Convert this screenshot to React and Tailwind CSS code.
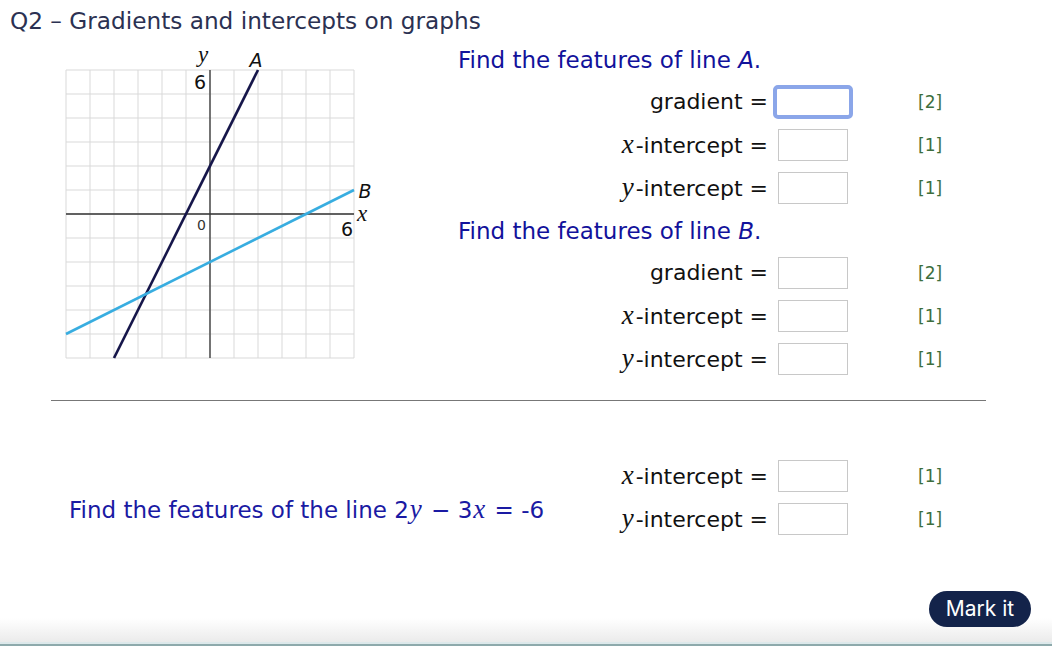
import React from "react";

const sans = { fontFamily: '"DejaVu Sans", Verdana, sans-serif' };

function V({ children }) {
  return (
    <span className="ml-[1px] mr-[2px] italic text-[27px] leading-none" style={{ fontFamily: '"Liberation Serif", "DejaVu Serif", serif' }}>
      {children}
    </span>
  );
}

function Row({ label, mark, focused }) {
  return (
    <div className="flex h-[43px] items-center">
      <div className="w-[310px] text-right text-[22px] leading-[24px] text-[#111] whitespace-nowrap">{label}</div>
      <div className="ml-[10px] flex w-[70px] justify-center">
        {focused ? (
          <div className="h-[34px] w-[80px] shrink-0 rounded-[5px] border-[4px] border-[#8ba6e9] bg-white" />
        ) : (
          <div className="h-[32px] w-[70px] shrink-0 border border-[#c8c8c8] bg-white" />
        )}
      </div>
      <div className="ml-[70px] text-[17px] leading-[20px] text-[#3d6e3d]">{mark}</div>
    </div>
  );
}

function Graph() {
  const vlines = [];
  for (let i = 0; i <= 12; i++) {
    vlines.push(<line key={"v" + i} x1={66 + 24 * i} y1={70} x2={66 + 24 * i} y2={358} stroke="#d9d9d9" strokeWidth="1" />);
    vlines.push(<line key={"h" + i} x1={66} y1={70 + 24 * i} x2={354} y2={70 + 24 * i} stroke="#d9d9d9" strokeWidth="1" />);
  }
  return (
    <svg width="400" height="358" viewBox="0 42 400 358" className="shrink-0 overflow-visible">
      {vlines}
      <line x1="66" y1="214" x2="354" y2="214" stroke="#333" strokeWidth="1.3" />
      <line x1="210" y1="70" x2="210" y2="358" stroke="#333" strokeWidth="1.3" />
      <line x1="114" y1="358" x2="258" y2="70" stroke="#16164a" strokeWidth="2.6" />
      <line x1="66" y1="334" x2="354" y2="190" stroke="#38ade0" strokeWidth="2.6" />
      <text x="203" y="62" fontSize="23" fontStyle="italic" fontFamily="Liberation Serif, serif" textAnchor="middle" fill="#111">y</text>
      <text x="206" y="89" fontSize="19" fontFamily="DejaVu Sans, sans-serif" textAnchor="end" fill="#111">6</text>
      <text x="256" y="67" fontSize="19" fontStyle="italic" fontFamily="DejaVu Sans, sans-serif" textAnchor="middle" fill="#111">A</text>
      <text x="365" y="198" fontSize="19" fontStyle="italic" fontFamily="DejaVu Sans, sans-serif" textAnchor="middle" fill="#111">B</text>
      <text x="362" y="221" fontSize="23" fontStyle="italic" fontFamily="Liberation Serif, serif" textAnchor="middle" fill="#111">x</text>
      <text x="353" y="236" fontSize="19" fontFamily="DejaVu Sans, sans-serif" textAnchor="end" fill="#111">6</text>
      <text x="206" y="230" fontSize="14" fontFamily="DejaVu Sans, sans-serif" textAnchor="end" fill="#333">0</text>
    </svg>
  );
}

export default function App() {
  return (
    <div className="relative flex h-[646px] w-[1052px] flex-col overflow-hidden bg-white" style={sans}>
      <div className="flex h-[42px] items-center pl-[10px] text-[23.2px] text-[#2b3152]">Q2 – Gradients and intercepts on graphs</div>

      <div className="flex h-[358px]">
        <Graph />
        <div className="ml-[58px] flex flex-col pt-[6px]">
          <div className="h-[24px] whitespace-nowrap text-[23px] leading-[24px] text-[#12129b]">
            Find the features of line <span className="italic">A</span>.
          </div>
          <div className="mt-[8px]">
            <Row label="gradient =" mark="[2]" focused />
            <Row label={<><V>x</V>-intercept =</>} mark="[1]" />
            <Row label={<><V>y</V>-intercept =</>} mark="[1]" />
          </div>
          <div className="mt-[10px] h-[24px] whitespace-nowrap text-[23px] leading-[24px] text-[#12129b]">
            Find the features of line <span className="italic">B</span>.
          </div>
          <div className="mt-[8px]">
            <Row label="gradient =" mark="[2]" />
            <Row label={<><V>x</V>-intercept =</>} mark="[1]" />
            <Row label={<><V>y</V>-intercept =</>} mark="[1]" />
          </div>
        </div>
      </div>

      <div className="ml-[51px] w-[935px] border-t border-[#777]" />

      <div className="flex pt-[53px]">
        <div className="w-[458px] pl-[69px] pt-[42px]">
          <div className="h-[24px] whitespace-nowrap text-[23px] leading-[24px] text-[#1a1aa3]">
            Find the features of the line 2<V>y</V> − 3<V>x</V> = -6
          </div>
        </div>
        <div className="flex flex-col">
          <Row label={<><V>x</V>-intercept =</>} mark="[1]" />
          <Row label={<><V>y</V>-intercept =</>} mark="[1]" />
        </div>
      </div>

      <div className="flex flex-1 items-start justify-end pr-[21px] pt-[51px] bg-[linear-gradient(to_bottom,#ffffff_0px,#ffffff_78px,#ebebeb_102px,#dde9eb_102px,#dde9eb_104px,#8eaaac_104px)]">
        <button
          className="flex h-[36px] w-[102px] items-center justify-center rounded-full bg-[#13234a] text-[21px] text-white"
          style={{ fontFamily: 'Inter, "Liberation Sans", sans-serif' }}
        >
          Mark it
        </button>
      </div>
    </div>
  );
}
